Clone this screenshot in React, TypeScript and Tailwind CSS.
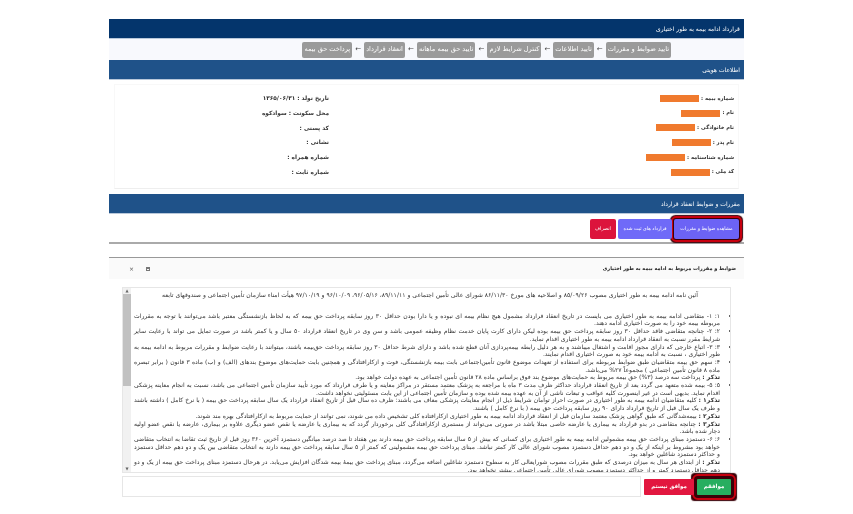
import React from "react";

const steps = [
  "تایید ضوابط و مقررات",
  "تایید اطلاعات",
  "کنترل شرایط لازم",
  "تایید حق بیمه ماهانه",
  "انعقاد قرارداد",
  "پرداخت حق بیمه",
];

const rightRows = ["شماره بیمه :", "نام :", "نام خانوادگی :", "نام پدر :", "شماره شناسنامه :", "کد ملی :"];
const leftRows = [
  "تاریخ تولد : ۱۳۶۵/۰۶/۳۱",
  "محل سکونت : سوادکوه",
  "کد پستی :",
  "نشانی :",
  "شماره همراه :",
  "شماره ثابت :",
];

const terms = [
  "۱: ۱- متقاضی ادامه بیمه به طور اختیاری می بایست در تاریخ انعقاد قرارداد مشمول هیچ نظام بیمه ای نبوده و یا دارا بودن حداقل ۳۰ روز سابقه پرداخت حق بیمه که به لحاظ بازنشستگی معتبر باشد می‌توانند با توجه به مقررات مربوطه بیمه خود را به صورت اختیاری ادامه دهند.",
  "۲: ۲- چنانچه متقاضی فاقد حداقل ۳۰ روز سابقه پرداخت حق بیمه بوده لیکن دارای کارت پایان خدمت نظام وظیفه عمومی باشد و سن وی در تاریخ انعقاد قرارداد ۵۰ سال و یا کمتر باشد در صورت تمایل می تواند با رعایت سایر شرایط مقرر نسبت به انعقاد قرارداد ادامه بیمه به طور اختیاری اقدام نماید.",
  "۳: ۳- اتباع خارجی که دارای مجوز اقامت و اشتغال میباشند و به هر دلیل رابطه بیمه‌پردازی آنان قطع شده باشد و دارای شرط حداقل ۳۰ روز سابقه پرداخت حق‌بیمه باشند، میتوانند با رعایت ضوابط و مقررات مربوط به ادامه بیمه به طور اختیاری ، نسبت به ادامه بیمه خود به صورت اختیاری اقدام نمایند.",
  "۴: سهم حق بیمه متقاضیان طبق ضوابط مربوطه برای استفاده از تعهدات موضوع قانون تأمین‌اجتماعی بابت بیمه بازنشستگی، فوت و ازکارافتادگی و همچنین بابت حمایت‌های موضوع بندهای (الف) و (ب) ماده ۳ قانون ( برابر تبصره ماده ۸ قانون تأمین اجتماعی ) مجموعاً ۲۷% می‌باشد.",
];

function Bar({ title, dark }: { title: string; dark?: boolean }) {
  return (
    <div className={`flex h-[20px] items-center border-b border-[#b9c8da] px-[4px] text-[6px] text-white ${dark ? "bg-[#04356c]" : "bg-[#1f5289]"}`}>
      {title}
    </div>
  );
}

export default function App() {
  return (
    <div dir="rtl" className="min-h-screen bg-white text-[#222] blur-[0.3px]" style={{ fontFamily: '"DejaVu Sans", sans-serif' }}>
      <div className="mx-auto w-[635px] pt-[19px]">
        <Bar title="قرارداد ادامه بیمه به طور اختیاری" dark />

        {/* Steps */}
        <div className="flex h-[21px] items-center gap-[2px] bg-[#f8f9fd] pr-[73px]">
          {steps.map((s, i) => (
            <React.Fragment key={s}>
              {i > 0 && <span className="w-[8px] text-center text-[7px] leading-none text-[#444]">←</span>}
              <span className="flex h-[16px] items-center whitespace-nowrap rounded-[2px] bg-[#9a9a9a] px-[2px] text-[6.6px] text-white">{s}</span>
            </React.Fragment>
          ))}
        </div>

        <Bar title="اطلاعات هویتی" />

        {/* Identity card */}
        <div className="mx-[5px] mt-[4px] h-[105px] border border-[#f8f8f8] border-b-[#eeeeee] pr-[4px] pt-[6px]">
          <div className="flex">
            <div className="flex w-[405px] flex-col">
              {rightRows.map((r) => (
                <div key={r} className="flex h-[14.8px] items-center gap-[2px] text-[5.2px] font-bold text-[#333]">
                  <span className="whitespace-nowrap">{r}</span>
                  <span className="h-[7px] w-[39px] bg-[#f07a2e]" />
                </div>
              ))}
            </div>
            <div className="flex flex-col">
              {leftRows.map((r) => (
                <div key={r} className="flex h-[14.8px] items-center text-[5.8px] font-bold text-[#333]">
                  {r}
                </div>
              ))}
            </div>
          </div>
        </div>

        <div className="mt-[5px]">
          <Bar title="مقررات و ضوابط انعقاد قرارداد" />
        </div>

        {/* Actions */}
        <div className="flex h-[30px] items-start gap-[2px] border-b-2 border-[#aaa] pr-[5px] pt-[5px]">
          <button className="h-[20px] w-[65px] rounded-[2px] bg-[#6c63f5] text-[4.8px] text-white shadow-[0_0_1px_4px_#3a0008] outline-[2.5px] outline-[#c8000f] outline-offset-[1px]">
            مشاهده ضوابط و مقررات
          </button>
          <button className="h-[20px] w-[54px] rounded-[2px] bg-[#6f6af8] text-[4.8px] text-white">قرارداد های ثبت شده</button>
          <button className="h-[20px] w-[26px] rounded-[2px] bg-[#dc143c] text-[4.8px] text-white">انصراف</button>
        </div>

        {/* Modal */}
        <div className="mt-[13px]">
          <div className="flex h-[22px] items-center justify-between border-t border-[#999] bg-[#fafafa] px-[8px]">
            <span className="text-[5px] font-bold text-[#222]">ضوابط و مقررات مربوط به ادامه بیمه به طور اختیاری</span>
            <span className="flex items-center gap-[12px] pl-[12px] text-[6px] text-[#555]">
              <span className="h-[4px] w-[4px] border border-[#777] border-t-2" />
              <span>×</span>
            </span>
          </div>

          <div className="mx-[13px] mt-[8px] flex h-[186px] overflow-hidden border border-[#e6e6e6]">
            <div className="min-w-0 flex-1 overflow-hidden pr-[4px] pl-[3px] text-justify text-[6.1px] leading-[7.7px] text-[#333]">
              <p className="mt-[3px] mb-[13px] text-center">
                آئین نامه ادامه بیمه به طور اختیاری مصوب ۸۵/۰۹/۲۶ و اصلاحیه های مورخ ۸۶/۱۱/۳۰ شورای عالی تأمین اجتماعی و ۸۹/۱۱/۱۱، ۹۶/۰۵/۱۶، ۹۶/۱۰/۰۹ و ۹۷/۱۰/۱۹ هیأت امناء سازمان تأمین اجتماعی و صندوقهای تابعه
              </p>
              <ul className="list-disc pr-[6px]">
                {terms.map((t) => (
                  <li key={t}>{t}</li>
                ))}
                <p><b>تذکر :</b> پرداخت سه درصد (۳%) حق بیمه مربوط به حمایت‌های موضوع بند فوق براساس ماده ۲۸ قانون تأمین اجتماعی به عهده دولت خواهد بود.</p>
                <li>۵: ۵- بیمه شده متعهد می گردد بعد از تاریخ انعقاد قرارداد حداکثر ظرف مدت ۳ ماه با مراجعه به پزشک معتمد مستقر در مراکز معاینه و یا طرف قرارداد که مورد تأیید سازمان تأمین اجتماعی می باشد، نسبت به انجام معاینه پزشکی اقدام نماید. بدیهی است در غیر اینصورت کلیه عواقب و تبعات ناشی از آن به عهده بیمه شده بوده و سازمان تأمین اجتماعی از این بابت مسئولیتی نخواهد داشت.</li>
                <p><b>تذکر۱ :</b> کلیه متقاضیان ادامه بیمه به طور اختیاری در صورت احراز توامان شرایط ذیل از انجام معاینات پزشکی معاف می باشند: ظرف ده سال قبل از تاریخ انعقاد قرارداد یک سال سابقه پرداخت حق بیمه ( با نرخ کامل ) داشته باشند و طرف یک سال قبل از تاریخ قرارداد دارای ۹۰ روز سابقه پرداخت حق بیمه ( با نرخ کامل ) باشند.</p>
                <p><b>تذکر۲ :</b> بیمه‌شدگانی که طبق گواهی پزشک معتمد سازمان قبل از انعقاد قرارداد ادامه بیمه به طور اختیاری ازکارافتاده کلی تشخیص داده می شوند، نمی توانند از حمایت مربوط به ازکارافتادگی بهره مند شوند.</p>
                <p><b>تذکر۳ :</b> چنانچه متقاضی در بدو قرارداد به بیماری یا عارضه خاصی مبتلا باشد در صورتی می‌تواند از مستمری ازکارافتادگی کلی برخوردار گردد که به بیماری یا عارضه یا نقص عضو دیگری علاوه بر بیماری، عارضه یا نقص عضو اولیه دچار شده باشد.</p>
                <li>۶: ۶- دستمزد مبنای پرداخت حق بیمه مشمولین ادامه بیمه به طور اختیاری برای کسانی که بیش از ۵ سال سابقه پرداخت حق بیمه دارند بین هفتاد تا صد درصد میانگین دستمزد آخرین ۳۶۰ روز قبل از تاریخ ثبت تقاضا به انتخاب متقاضی خواهد بود مشروط بر اینکه از یک و دو دهم حداقل دستمزد مصوب شورای عالی کار کمتر نباشد. مبنای پرداخت حق بیمه مشمولینی که کمتر از ۵ سال سابقه پرداخت حق بیمه دارند به انتخاب متقاضی بین یک و دو دهم حداقل دستمزد و حداکثر دستمزد شاغلین خواهد بود.</li>
                <p><b>تذکر :</b> از ابتدای هر سال به میزان درصدی که طبق مقررات مصوب شورایعالی کار به سطوح دستمزد شاغلین اضافه می‌گردد، مبنای پرداخت حق بیمهٔ بیمه شدگان افزایش می‌یابد. در هرحال دستمزد مبنای پرداخت حق بیمه از یک و دو دهم حداقل دستمزد کمتر و از حداکثر دستمزد مصوب شورای عالی تأمین اجتماعی بیشتر نخواهد بود.</p>
              </ul>
            </div>
            {/* Scrollbar */}
            <div className="flex w-[8px] flex-none flex-col items-center justify-between bg-[#f1f1f1] text-[4px] leading-[6px] text-[#666]">
              <span>▲</span>
              <div className="mb-[80px] w-full flex-1 bg-[#c1c1c1]" />
              <span>▼</span>
            </div>
          </div>

          {/* Answer row */}
          <div className="mx-[13px] mt-[5px] flex h-[17px] items-center gap-[3px]">
            <button className="h-[16px] w-[34px] flex-none rounded-[1px] bg-[#27ae60] text-[5.5px] font-bold text-white shadow-[0_0_1px_6px_#3a0008] outline-[2.5px] outline-[#c8000f] outline-offset-[3px]">
              موافقم
            </button>
            <button className="h-[16px] w-[50px] flex-none rounded-[1px] bg-[#e2173f] text-[5.5px] font-bold text-white">
              موافق نیستم
            </button>
            <div className="h-[21px] flex-1 border border-[#e6e6e6]" />
          </div>
        </div>
      </div>
    </div>
  );
}
